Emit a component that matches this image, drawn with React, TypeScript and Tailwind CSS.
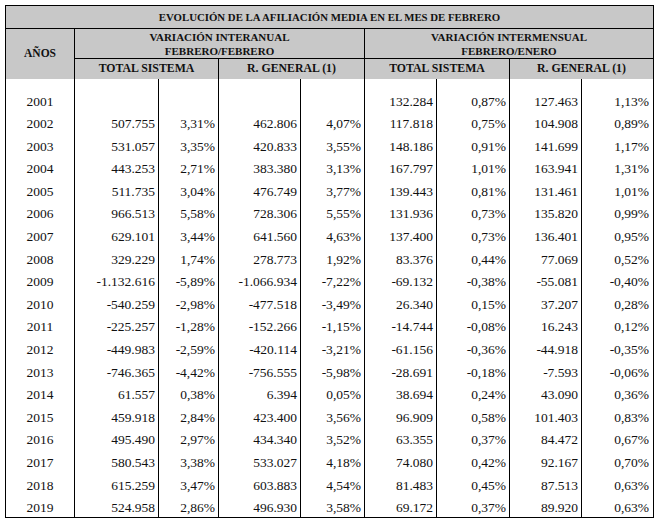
const rows: string[][] = [
  ["2001", "", "", "", "", "132.284", "0,87%", "127.463", "1,13%"],
  ["2002", "507.755", "3,31%", "462.806", "4,07%", "117.818", "0,75%", "104.908", "0,89%"],
  ["2003", "531.057", "3,35%", "420.833", "3,55%", "148.186", "0,91%", "141.699", "1,17%"],
  ["2004", "443.253", "2,71%", "383.380", "3,13%", "167.797", "1,01%", "163.941", "1,31%"],
  ["2005", "511.735", "3,04%", "476.749", "3,77%", "139.443", "0,81%", "131.461", "1,01%"],
  ["2006", "966.513", "5,58%", "728.306", "5,55%", "131.936", "0,73%", "135.820", "0,99%"],
  ["2007", "629.101", "3,44%", "641.560", "4,63%", "137.400", "0,73%", "136.401", "0,95%"],
  ["2008", "329.229", "1,74%", "278.773", "1,92%", "83.376", "0,44%", "77.069", "0,52%"],
  ["2009", "-1.132.616", "-5,89%", "-1.066.934", "-7,22%", "-69.132", "-0,38%", "-55.081", "-0,40%"],
  ["2010", "-540.259", "-2,98%", "-477.518", "-3,49%", "26.340", "0,15%", "37.207", "0,28%"],
  ["2011", "-225.257", "-1,28%", "-152.266", "-1,15%", "-14.744", "-0,08%", "16.243", "0,12%"],
  ["2012", "-449.983", "-2,59%", "-420.114", "-3,21%", "-61.156", "-0,36%", "-44.918", "-0,35%"],
  ["2013", "-746.365", "-4,42%", "-756.555", "-5,98%", "-28.691", "-0,18%", "-7.593", "-0,06%"],
  ["2014", "61.557", "0,38%", "6.394", "0,05%", "38.694", "0,24%", "43.090", "0,36%"],
  ["2015", "459.918", "2,84%", "423.400", "3,56%", "96.909", "0,58%", "101.403", "0,83%"],
  ["2016", "495.490", "2,97%", "434.340", "3,52%", "63.355", "0,37%", "84.472", "0,67%"],
  ["2017", "580.543", "3,38%", "533.027", "4,18%", "74.080", "0,42%", "92.167", "0,70%"],
  ["2018", "615.259", "3,47%", "603.883", "4,54%", "81.483", "0,45%", "87.513", "0,63%"],
  ["2019", "524.958", "2,86%", "496.930", "3,58%", "69.172", "0,37%", "89.920", "0,63%"],
];

// column widths incl. right border line
const cols = [
  "w-[69px] justify-center border-r border-black",
  "w-[84px] justify-end pr-[3px] border-r border-black",
  "w-[60px] justify-end pr-[3px] border-r border-black",
  "w-[82px] justify-end pr-[3px] border-r border-black",
  "w-[64px] justify-end pr-[3px] border-r border-black",
  "w-[72px] justify-end pr-[3px] border-r border-black",
  "w-[73px] justify-end pr-[3px] border-r border-black",
  "w-[72px] justify-end pr-[3px] border-r border-black",
  "w-[71px] justify-end pr-[4px]",
];

const Row = ({ cells, first }: { cells: string[]; first: boolean }) => (
  <div className={`flex ${first ? "h-[31px]" : "h-[22.6px]"}`}>
    {cells.map((c, i) => (
      <div key={i} className={`flex items-end pb-[2px] ${cols[i]}`}>
        <span className="leading-none">{c}</span>
      </div>
    ))}
  </div>
);

export default function App() {
  return (
    <div
      className="w-[662px] h-[527px] bg-white pt-[5px] pl-[5px] text-[#111]"
      style={{ fontFamily: '"Liberation Serif", serif' }}
    >
      <div className="w-[649px] border border-black">
        {/* header */}
        <div className="bg-[#c8c8c8] font-bold text-[10.8px]">
          <div className="h-[23px] flex items-center justify-center border-b border-black">
            EVOLUCIÓN DE LA AFILIACIÓN MEDIA EN EL MES DE FEBRERO
          </div>
          <div className="flex h-[50px]">
            <div className="w-[69px] flex items-center justify-center border-r border-black text-[11.5px]">
              AÑOS
            </div>
            <div className="w-[290px] flex flex-col border-r border-black">
              <div className="h-[30px] flex flex-col items-center justify-center border-b border-black leading-[14px] text-[11px]">
                <span>VARIACIÓN INTERANUAL</span>
                <span>FEBRERO/FEBRERO</span>
              </div>
              <div className="flex flex-1 text-[11.8px]">
                <div className="w-[144px] flex items-center justify-center border-r border-black">TOTAL SISTEMA</div>
                <div className="flex-1 flex items-center justify-center">R. GENERAL (1)</div>
              </div>
            </div>
            <div className="flex-1 flex flex-col">
              <div className="h-[30px] flex flex-col items-center justify-center border-b border-black leading-[14px] text-[11px]">
                <span>VARIACIÓN INTERMENSUAL</span>
                <span>FEBRERO/ENERO</span>
              </div>
              <div className="flex flex-1 text-[11.8px]">
                <div className="w-[145px] flex items-center justify-center border-r border-black">TOTAL SISTEMA</div>
                <div className="flex-1 flex items-center justify-center">R. GENERAL (1)</div>
              </div>
            </div>
          </div>
        </div>
        {/* body */}
        <div className="text-[13.5px]">
          {rows.map((r, i) => (
            <Row key={r[0]} cells={r} first={i === 0} />
          ))}
        </div>
      </div>
    </div>
  );
}
